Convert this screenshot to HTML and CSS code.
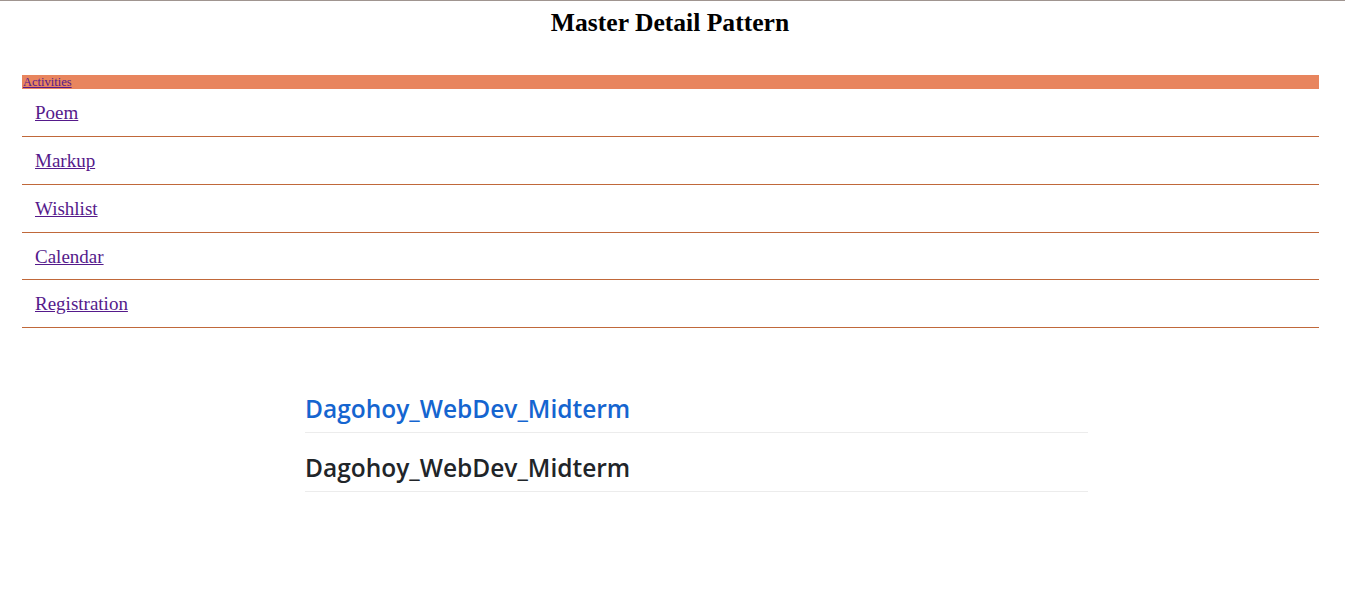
FILE: index.html
```html
<!DOCTYPE html>
<html>
<head>
<meta charset="utf-8">
<link rel="stylesheet" href="styles.css">
</head>
<body>
<div class="topline"></div>
<h2 class="title">Master Detail Pattern</h2>
<nav class="master">
  <div class="bar"><a href="#">Activities</a></div>
  <ul class="list">
    <li><a href="#">Poem</a></li>
    <li><a href="#">Markup</a></li>
    <li><a href="#">Wishlist</a></li>
    <li><a href="#">Calendar</a></li>
    <li><a href="#">Registration</a></li>
  </ul>
</nav>
<section class="detail">
  <h3 class="dtitle blue">Dagohoy_WebDev_Midterm</h3>
  <h3 class="dtitle dark">Dagohoy_WebDev_Midterm</h3>
</section>
</body>
</html>
```
FILE: styles.css
```css
html, body { margin: 0; padding: 0; background: #fff; }
body { font-family: "Liberation Serif", "Times New Roman", serif; }
.topline { height: 1px; background: #a09590; }
.title {
  margin: 8px 0 0;
  padding-right: 5px;
  text-align: center;
  font-size: 25.6px;
  line-height: 27px;
  font-weight: bold;
  color: #000;
}
.master { margin: 39px 26px 0 22px; }
.bar {
  background: #e8855e;
  height: 14px;
  font-size: 12.5px;
  line-height: 14px;
  padding-left: 1px;
}
.bar a { color: #551a8b; }
.list { list-style: none; margin: 0; padding: 0; }
.list li {
  height: 47px;
  border-bottom: 1px solid #c0683a;
  padding-left: 13px;
  font-size: 19px;
  line-height: 47px;
}
.list li:nth-child(2n) { height: 46.5px; }
.list a { color: #551a8b; }
.detail {
  margin: 65px 0 0 305px;
  width: 783px;
  font-family: "Open Sans", "Noto Sans", sans-serif;
}
.dtitle {
  margin: 0 0 19px;
  padding-bottom: 7px;
  font-size: 24.5px;
  line-height: 32px;
  font-weight: 600;
  border-bottom: 1px solid #ececec;
}
.blue { color: #1565d0; }
.dark { color: #212529; }
```
